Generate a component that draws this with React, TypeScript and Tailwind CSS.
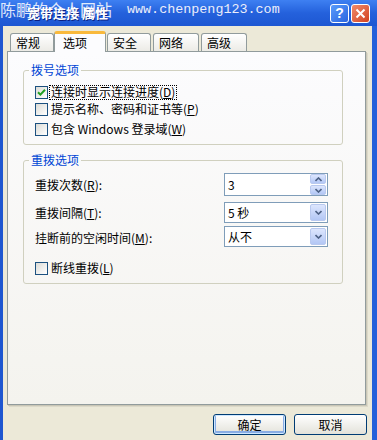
import React from "react";

// access key inside brackets, underlined like the XP dialog
const Key = ({ k }: { k: string }) => (
  <span>
    (<span className="underline">{k}</span>)
  </span>
);

const CheckBox = ({ checked }: { checked?: boolean }) => (
  <span className="w-[13px] h-[13px] shrink-0 border border-[#1C5180] bg-linear-to-br from-[#DCDCD7] to-white flex items-center justify-center">
    {checked && (
      <svg width="9" height="9" viewBox="0 0 9 9">
        <path d="M1 4.2 L3.4 6.6 L8 1.8" stroke="#21A121" strokeWidth="2" fill="none" />
      </svg>
    )}
  </span>
);

const Chevron = ({ up }: { up?: boolean }) => (
  <svg width="7" height="5" viewBox="0 0 7 5">
    <path
      d={up ? "M0.5 4 L3.5 1 L6.5 4" : "M0.5 1 L3.5 4 L6.5 1"}
      stroke="#4D6185"
      strokeWidth="1.6"
      fill="none"
    />
  </svg>
);

const ArrowButton = ({ className, up }: { className: string; up?: boolean }) => (
  <span
    className={
      "flex items-center justify-center rounded-[2px] border border-[#B9C9EF] bg-linear-to-b from-[#DDE6FD] to-[#B3C7F5] " +
      className
    }
  >
    <Chevron up={up} />
  </span>
);

const Spinner = ({ value }: { value: string }) => (
  <div className="w-[104px] h-[23px] border border-[#7F9DB9] bg-white flex items-center justify-between pl-[3px] pr-[1px]">
    <span>{value}</span>
    <div className="flex flex-col gap-px">
      <ArrowButton className="w-[16px] h-[10px]" up />
      <ArrowButton className="w-[16px] h-[10px]" />
    </div>
  </div>
);

const Select = ({ value }: { value: string }) => (
  <div className="w-[104px] h-[21px] border border-[#7F9DB9] bg-white flex items-center justify-between pl-[3px] pr-[1px]">
    <span>{value}</span>
    <ArrowButton className="w-[16px] h-[17px]" />
  </div>
);

const Tab = ({ label, active, className }: { label: string; active?: boolean; className: string }) => (
  <div
    className={
      active
        ? "relative z-10 h-[21px] -mb-px rounded-t-[3px] border border-b-0 border-[#919B9C] border-t-[3px] border-t-[#F9B93C] bg-[#FCFCFE] pl-[8px] flex items-center " +
          className
        : "h-[18px] rounded-t-[3px] border border-b-0 border-[#919B9C] bg-linear-to-b from-white to-[#ECEBE6] pl-[5px] flex items-center " +
          className
    }
  >
    {label}
  </div>
);

const Button = ({ label, primary }: { label: string; primary?: boolean }) => (
  <button
    className={
      "w-[73px] h-[21px] rounded-[3px] border border-[#003C74] bg-linear-to-b from-white to-[#E3E2DA] flex items-center justify-center " +
      (primary ? "shadow-[inset_0_0_0_1px_#CEE7FF,inset_0_-1px_0_2px_#89ADE4]" : "")
    }
  >
    {label}
  </button>
);

export default function App() {
  return (
    <div className="w-[377px] h-[440px] overflow-hidden flex flex-col text-[12px] leading-[14px] text-black font-['Noto_Sans_CJK_SC',sans-serif]">
      {/* title bar */}
      <div className="relative h-[26px] shrink-0 bg-linear-to-b from-[#3E80F2] via-[#2461DC] to-[#1D57D2] flex items-center pl-[27px] pr-[7px]">
        <span className="font-bold text-[13px] text-white [text-shadow:1px_1px_0_#0A1E80]">
          宽带连接 属性
        </span>
        <span className="absolute left-0 top-[-1px] text-[16px] leading-[20px] text-white/85">
          陈鹏的个人网站
        </span>
        <span className="absolute left-[127px] top-[2px] text-[13.4px] leading-[16px] text-[#ECEEFA] font-['Liberation_Mono',monospace]">
          www.chenpeng123.com
        </span>
        <div className="ml-auto flex gap-[2px]">
          <div className="w-[19px] h-[19px] rounded-[3px] border border-white bg-linear-to-br from-[#5A9CFB] to-[#2A64E0] flex items-center justify-center text-white font-bold text-[14px] font-['Liberation_Sans',sans-serif]">
            ?
          </div>
          <div className="w-[19px] h-[19px] rounded-[3px] border border-white bg-linear-to-br from-[#F08A6A] to-[#D2401C] flex items-center justify-center">
            <svg width="11" height="11" viewBox="0 0 11 11">
              <path d="M1.5 1.5 L9.5 9.5 M9.5 1.5 L1.5 9.5" stroke="white" strokeWidth="2" />
            </svg>
          </div>
        </div>
      </div>

      {/* window body */}
      <div className="flex-1 flex flex-col bg-[#ECE9D8] border-l-[3px] border-l-[#1E56D0] border-r-[5px] border-r-[#2460DA]">
        {/* tabs */}
        <div className="mt-[5px] ml-[7px] h-[20px] flex items-end">
          <Tab label="常规" className="w-[44px]" />
          <Tab label="选项" active className="w-[52px]" />
          <Tab label="安全" className="w-[44px] ml-px" />
          <Tab label="网络" className="w-[46px] ml-[2px]" />
          <Tab label="高级" className="w-[46px] ml-[2px]" />
        </div>

        {/* tab panel */}
        <div className="ml-[4px] w-[359px] h-[354px] border border-[#919B9C] bg-linear-to-b from-[#FCFCFE] to-[#F4F3EE] shadow-[1px_1px_0_#C9C6B6,2px_2px_0_#DCD9C9]">
          <fieldset className="mt-[11px] ml-[15px] w-[320px] border border-[#D0D0BF] rounded-[3px] pb-[8px]">
            <legend className="ml-[5px] px-[2px] text-[#0046D5]">拨号选项</legend>
            <div className="pl-[11px] pt-[8px] flex flex-col">
              <div className="h-[14px] flex items-center">
                <CheckBox checked />
                <span className="ml-px px-px h-[15px] flex items-center border border-dotted border-black">
                  连接时显示连接进度<Key k="D" />
                </span>
              </div>
              <div className="mt-[3px] h-[14px] flex items-center">
                <CheckBox />
                <span className="ml-[3px]">
                  提示名称、密码和证书等<Key k="P" />
                </span>
              </div>
              <div className="mt-[6px] h-[14px] flex items-center">
                <CheckBox />
                <span className="ml-[3px]">
                  包含 Windows 登录域<Key k="W" />
                </span>
              </div>
            </div>
          </fieldset>

          <fieldset className="mt-[8px] ml-[15px] w-[320px] border border-[#D0D0BF] rounded-[3px] pb-[8px]">
            <legend className="ml-[5px] px-[2px] text-[#0046D5]">重拨选项</legend>
            <div className="pl-[11px] pr-[14px] pt-[6px] flex flex-col">
              <div className="h-[23px] flex items-center justify-between">
                <span>
                  重拨次数<Key k="R" />:
                </span>
                <Spinner value="3" />
              </div>
              <div className="mt-[6px] h-[21px] flex items-center justify-between">
                <span>
                  重拨间隔<Key k="T" />:
                </span>
                <Select value="5 秒" />
              </div>
              <div className="mt-[3px] h-[21px] flex items-center justify-between">
                <span className="mt-[3px]">
                  挂断前的空闲时间<Key k="M" />:
                </span>
                <Select value="从不" />
              </div>
              <div className="mt-[14px] h-[14px] flex items-center">
                <CheckBox />
                <span className="ml-[3px]">
                  断线重拨<Key k="L" />
                </span>
              </div>
            </div>
          </fieldset>
        </div>

        {/* dialog buttons */}
        <div className="mt-[9px] pr-[5px] flex justify-end gap-[8px]">
          <Button label="确定" primary />
          <Button label="取消" />
        </div>
      </div>
    </div>
  );
}
